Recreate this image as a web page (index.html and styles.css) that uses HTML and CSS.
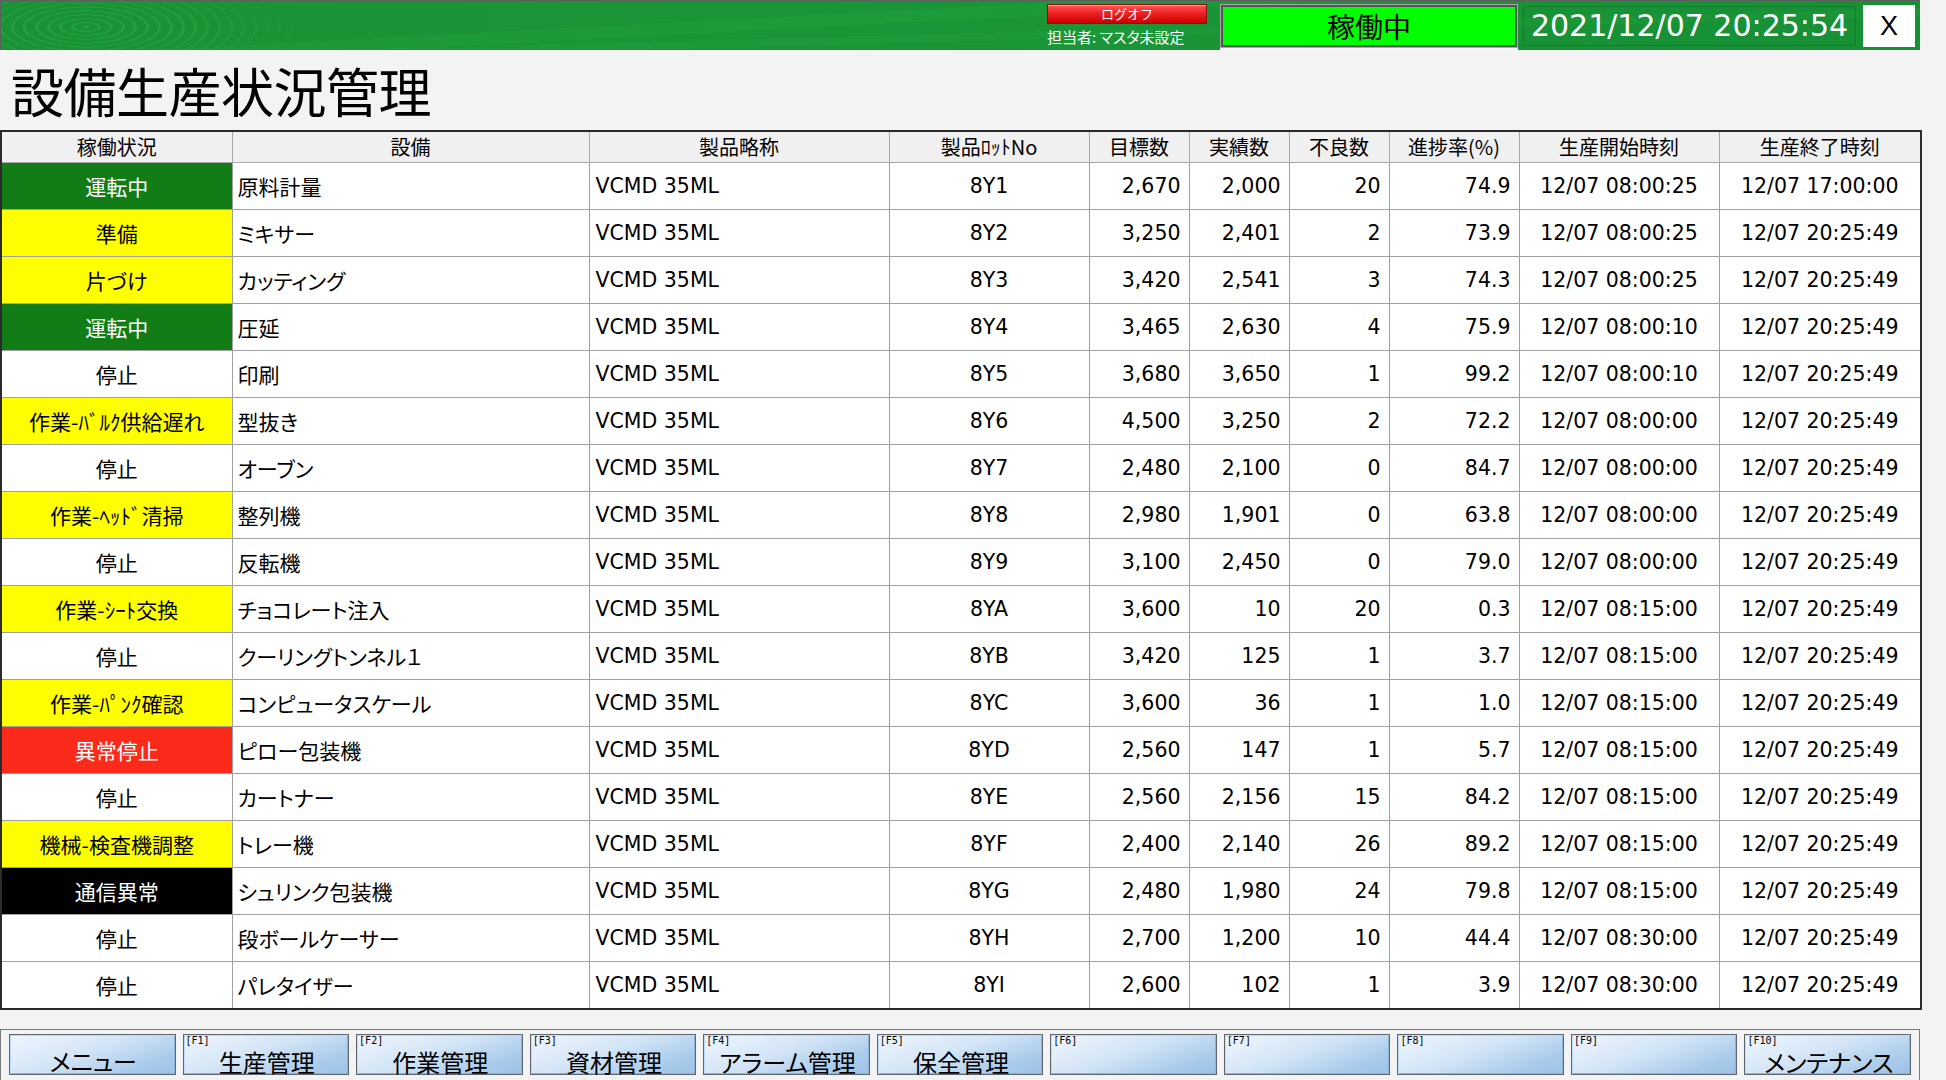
FILE: index.html
```html
<!DOCTYPE html>
<html lang="ja">
<head>
<meta charset="utf-8">
<title>設備生産状況管理</title>
<link rel="stylesheet" href="styles.css">
</head>
<body>
<div class="app">
  <header class="topbar">
    <div class="user">
      <button class="logoff">ログオフ</button>
      <div class="tanto">担当者: マスタ未設定</div>
    </div>
    <div class="state-box">稼働中</div>
    <div class="clock">2021/12/07 20:25:54</div>
    <button class="close">X</button>
  </header>

  <h1 class="title">設備生産状況管理</h1>

  <table class="grid">
    <colgroup>
      <col class="c1"><col class="c2"><col class="c3"><col class="c4"><col class="c5">
      <col class="c6"><col class="c7"><col class="c8"><col class="c9"><col class="c10">
    </colgroup>
    <thead>
      <tr>
        <th>稼働状況</th><th>設備</th><th>製品略称</th><th>製品ﾛｯﾄNo</th><th>目標数</th>
        <th>実績数</th><th>不良数</th><th>進捗率(%)</th><th>生産開始時刻</th><th>生産終了時刻</th>
      </tr>
    </thead>
    <tbody>
      <tr><td class="st st-run">運転中</td><td class="jp">原料計量</td><td class="prod">VCMD 35ML</td><td class="lot">8Y1</td><td class="num">2,670</td><td class="num">2,000</td><td class="num">20</td><td class="num">74.9</td><td class="time">12/07 08:00:25</td><td class="time">12/07 17:00:00</td></tr>
      <tr><td class="st st-warn">準備</td><td class="jp">ミキサー</td><td class="prod">VCMD 35ML</td><td class="lot">8Y2</td><td class="num">3,250</td><td class="num">2,401</td><td class="num">2</td><td class="num">73.9</td><td class="time">12/07 08:00:25</td><td class="time">12/07 20:25:49</td></tr>
      <tr><td class="st st-warn">片づけ</td><td class="jp">カッティング</td><td class="prod">VCMD 35ML</td><td class="lot">8Y3</td><td class="num">3,420</td><td class="num">2,541</td><td class="num">3</td><td class="num">74.3</td><td class="time">12/07 08:00:25</td><td class="time">12/07 20:25:49</td></tr>
      <tr><td class="st st-run">運転中</td><td class="jp">圧延</td><td class="prod">VCMD 35ML</td><td class="lot">8Y4</td><td class="num">3,465</td><td class="num">2,630</td><td class="num">4</td><td class="num">75.9</td><td class="time">12/07 08:00:10</td><td class="time">12/07 20:25:49</td></tr>
      <tr><td class="st">停止</td><td class="jp">印刷</td><td class="prod">VCMD 35ML</td><td class="lot">8Y5</td><td class="num">3,680</td><td class="num">3,650</td><td class="num">1</td><td class="num">99.2</td><td class="time">12/07 08:00:10</td><td class="time">12/07 20:25:49</td></tr>
      <tr><td class="st st-warn">作業-ﾊﾞﾙｸ供給遅れ</td><td class="jp">型抜き</td><td class="prod">VCMD 35ML</td><td class="lot">8Y6</td><td class="num">4,500</td><td class="num">3,250</td><td class="num">2</td><td class="num">72.2</td><td class="time">12/07 08:00:00</td><td class="time">12/07 20:25:49</td></tr>
      <tr><td class="st">停止</td><td class="jp">オーブン</td><td class="prod">VCMD 35ML</td><td class="lot">8Y7</td><td class="num">2,480</td><td class="num">2,100</td><td class="num">0</td><td class="num">84.7</td><td class="time">12/07 08:00:00</td><td class="time">12/07 20:25:49</td></tr>
      <tr><td class="st st-warn">作業-ﾍｯﾄﾞ清掃</td><td class="jp">整列機</td><td class="prod">VCMD 35ML</td><td class="lot">8Y8</td><td class="num">2,980</td><td class="num">1,901</td><td class="num">0</td><td class="num">63.8</td><td class="time">12/07 08:00:00</td><td class="time">12/07 20:25:49</td></tr>
      <tr><td class="st">停止</td><td class="jp">反転機</td><td class="prod">VCMD 35ML</td><td class="lot">8Y9</td><td class="num">3,100</td><td class="num">2,450</td><td class="num">0</td><td class="num">79.0</td><td class="time">12/07 08:00:00</td><td class="time">12/07 20:25:49</td></tr>
      <tr><td class="st st-warn">作業-ｼｰﾄ交換</td><td class="jp">チョコレート注入</td><td class="prod">VCMD 35ML</td><td class="lot">8YA</td><td class="num">3,600</td><td class="num">10</td><td class="num">20</td><td class="num">0.3</td><td class="time">12/07 08:15:00</td><td class="time">12/07 20:25:49</td></tr>
      <tr><td class="st">停止</td><td class="jp">クーリングトンネル１</td><td class="prod">VCMD 35ML</td><td class="lot">8YB</td><td class="num">3,420</td><td class="num">125</td><td class="num">1</td><td class="num">3.7</td><td class="time">12/07 08:15:00</td><td class="time">12/07 20:25:49</td></tr>
      <tr><td class="st st-warn">作業-ﾊﾟﾝｸ確認</td><td class="jp">コンピュータスケール</td><td class="prod">VCMD 35ML</td><td class="lot">8YC</td><td class="num">3,600</td><td class="num">36</td><td class="num">1</td><td class="num">1.0</td><td class="time">12/07 08:15:00</td><td class="time">12/07 20:25:49</td></tr>
      <tr><td class="st st-err">異常停止</td><td class="jp">ピロー包装機</td><td class="prod">VCMD 35ML</td><td class="lot">8YD</td><td class="num">2,560</td><td class="num">147</td><td class="num">1</td><td class="num">5.7</td><td class="time">12/07 08:15:00</td><td class="time">12/07 20:25:49</td></tr>
      <tr><td class="st">停止</td><td class="jp">カートナー</td><td class="prod">VCMD 35ML</td><td class="lot">8YE</td><td class="num">2,560</td><td class="num">2,156</td><td class="num">15</td><td class="num">84.2</td><td class="time">12/07 08:15:00</td><td class="time">12/07 20:25:49</td></tr>
      <tr><td class="st st-warn">機械-検査機調整</td><td class="jp">トレー機</td><td class="prod">VCMD 35ML</td><td class="lot">8YF</td><td class="num">2,400</td><td class="num">2,140</td><td class="num">26</td><td class="num">89.2</td><td class="time">12/07 08:15:00</td><td class="time">12/07 20:25:49</td></tr>
      <tr><td class="st st-comm">通信異常</td><td class="jp">シュリンク包装機</td><td class="prod">VCMD 35ML</td><td class="lot">8YG</td><td class="num">2,480</td><td class="num">1,980</td><td class="num">24</td><td class="num">79.8</td><td class="time">12/07 08:15:00</td><td class="time">12/07 20:25:49</td></tr>
      <tr><td class="st">停止</td><td class="jp">段ボールケーサー</td><td class="prod">VCMD 35ML</td><td class="lot">8YH</td><td class="num">2,700</td><td class="num">1,200</td><td class="num">10</td><td class="num">44.4</td><td class="time">12/07 08:30:00</td><td class="time">12/07 20:25:49</td></tr>
      <tr><td class="st">停止</td><td class="jp">パレタイザー</td><td class="prod">VCMD 35ML</td><td class="lot">8YI</td><td class="num">2,600</td><td class="num">102</td><td class="num">1</td><td class="num">3.9</td><td class="time">12/07 08:30:00</td><td class="time">12/07 20:25:49</td></tr>
    </tbody>
  </table>

  <nav class="fkeys">
    <button class="fkey"><span class="fk-label"></span><span class="fk-text">メニュー</span></button>
    <button class="fkey"><span class="fk-label">[F1]</span><span class="fk-text">生産管理</span></button>
    <button class="fkey"><span class="fk-label">[F2]</span><span class="fk-text">作業管理</span></button>
    <button class="fkey"><span class="fk-label">[F3]</span><span class="fk-text">資材管理</span></button>
    <button class="fkey"><span class="fk-label">[F4]</span><span class="fk-text">アラーム管理</span></button>
    <button class="fkey"><span class="fk-label">[F5]</span><span class="fk-text">保全管理</span></button>
    <button class="fkey"><span class="fk-label">[F6]</span><span class="fk-text"></span></button>
    <button class="fkey"><span class="fk-label">[F7]</span><span class="fk-text"></span></button>
    <button class="fkey"><span class="fk-label">[F8]</span><span class="fk-text"></span></button>
    <button class="fkey"><span class="fk-label">[F9]</span><span class="fk-text"></span></button>
    <button class="fkey"><span class="fk-label">[F10]</span><span class="fk-text">メンテナンス</span></button>
  </nav>
</div>
</body>
</html>
```

FILE: styles.css
```css
html, body {
  margin: 0;
  padding: 0;
}

body {
  width: 1946px;
  height: 1080px;
  overflow: hidden;
  background: #f3f3f3;
  font-family: "Noto Sans CJK JP", sans-serif;
  font-feature-settings: "palt";
  color: #000;
}

.app {
  width: 1920px;
}

/* ---------- top bar ---------- */
.topbar {
  position: relative;
  box-sizing: border-box;
  height: 50px;
  border-top: 1px solid #5e5e5e;
  border-left: 1px solid #5e5e5e;
  display: flex;
  align-items: center;
  justify-content: flex-end;
  padding-right: 5px;
  background:
    linear-gradient(177deg, rgba(255,255,255,0) 0 38%, rgba(40,180,70,0.16) 38% 46%, rgba(255,255,255,0) 46% 100%),
    linear-gradient(178.5deg, rgba(255,255,255,0) 0 58%, rgba(40,180,70,0.13) 58% 66%, rgba(255,255,255,0) 66% 100%),
    linear-gradient(90deg, #1a9236 0%, #1a9637 45%, #179035 100%);
  overflow: hidden;
}

.topbar::before {
  content: "";
  position: absolute;
  left: 0;
  top: -1px;
  width: 420px;
  height: 50px;
  background: repeating-radial-gradient(ellipse 190px 62px at 85px 27px,
    rgba(45, 185, 75, 0.4) 0 3px,
    rgba(45, 185, 75, 0) 3px 12px);
  -webkit-mask-image: radial-gradient(ellipse 220px 50px at 90px 27px, #000 30%, transparent 100%);
  mask-image: radial-gradient(ellipse 220px 50px at 90px 27px, #000 30%, transparent 100%);
}

.user {
  position: relative;
  width: 160px;
  margin-right: 14px;
  display: flex;
  flex-direction: column;
  align-self: flex-start;
  padding-top: 3px;
}

.logoff {
  height: 20px;
  margin: 0;
  padding: 0;
  border: 1px solid #8a1010;
  background: linear-gradient(#ff5a5a 0%, #ee2222 45%, #cc0000 100%);
  color: #fff;
  font-family: "Noto Sans CJK JP", sans-serif;
  font-size: 13px;
  line-height: 18px;
  box-shadow: inset 0 1px 0 rgba(255,255,255,0.45);
}

.tanto {
  margin-top: 3px;
  color: #fff;
  font-size: 15px;
  line-height: 20px;
  white-space: nowrap;
}

.state-box {
  position: relative;
  box-sizing: border-box;
  width: 296px;
  height: 42px;
  border: 2px solid #555;
  box-shadow: 0 0 0 1px #a9a9a9, 0 2px 0 1px #f4f4f4;
  background: #00ff00;
  color: #000;
  font-size: 28px;
  line-height: 38px;
  text-align: center;
  margin-top: 1px;
}

.clock {
  position: relative;
  box-sizing: border-box;
  width: 333px;
  height: 40px;
  margin-left: 6px;
  border: 1px solid rgba(0, 60, 20, 0.25);
  color: #fff;
  font-family: "DejaVu Sans", sans-serif;
  font-size: 30px;
  line-height: 38px;
  text-align: center;
  white-space: nowrap;
}

.close {
  position: relative;
  width: 52px;
  height: 42px;
  margin: 0 0 0 7px;
  padding: 0;
  border: none;
  background: #fff;
  color: #000;
  font-family: "Liberation Sans", sans-serif;
  font-size: 27px;
  line-height: 42px;
}

/* ---------- title ---------- */
.title {
  margin: 0;
  height: 80px;
  padding-left: 11px;
  font-size: 53px;
  font-weight: 400;
  line-height: 80px;
  letter-spacing: -0.5px;
}

/* ---------- table ---------- */
.grid {
  width: 1920px;
  table-layout: fixed;
  border-collapse: collapse;
  border: 2px solid #2b2b2b;
  background: #fff;
}

.c1 { width: 231px; }
.c2 { width: 357px; }
.c3 { width: 300px; }
.c4 { width: 200px; }
.c5 { width: 100px; }
.c6 { width: 100px; }
.c7 { width: 100px; }
.c8 { width: 130px; }
.c9 { width: 200px; }
.c10 { width: 202px; }

.grid th {
  height: 30px;
  padding: 0;
  background: #f0f0f0;
  border: 1px solid #a8a8a8;
  border-top: none;
  font-size: 20px;
  font-weight: 400;
  line-height: 28px;
  white-space: nowrap;
  font-feature-settings: normal;
}

.grid td {
  height: 46px;
  padding: 0;
  border: 1px solid #a0a0a0;
  font-size: 21px;
  line-height: 24px;
  white-space: nowrap;
  overflow: hidden;
}

.st { text-align: center; }
.st-run { background: #127d17; color: #fff; }
.st-warn { background: #ffff00; }
.st-err { background: #fb2a1b; color: #fff; }
.st-comm { background: #000; color: #fff; }

.jp { padding-left: 5px !important; }

.prod {
  padding-left: 6px !important;
  font-family: "DejaVu Sans", "Noto Sans CJK JP", sans-serif;
  font-size: 20.5px !important;
}

.lot {
  text-align: center;
  font-family: "DejaVu Sans", "Noto Sans CJK JP", sans-serif;
  font-size: 20.5px !important;
}

.num {
  text-align: right;
  padding-right: 8px !important;
  font-family: "DejaVu Sans", sans-serif;
  font-size: 20.5px !important;
}

.time {
  text-align: center;
  font-family: "DejaVu Sans", sans-serif;
  font-size: 20.5px !important;
}

/* ---------- function keys ---------- */
.fkeys {
  box-sizing: border-box;
  width: 1920px;
  height: 51px;
  margin-top: 19px;
  border: 1px solid #7a7a7a;
  border-bottom: none;
  padding: 4px 8px 0 8px;
  display: flex;
  gap: 7px;
}

.fkey {
  flex: 1 1 0;
  height: 41px;
  margin: 0;
  padding: 0 0 0 2px;
  border: 1px solid #5f6670;
  box-shadow: inset 1px 1px 0 #bcdcff, inset -1px -1px 0 #8fb4d8;
  background: linear-gradient(160deg, #f0f6fd 0%, #d3e5f6 45%, #a9cbeb 80%, #9dc2e6 100%);
  display: flex;
  flex-direction: column;
  align-items: stretch;
  font-family: "Noto Sans CJK JP", sans-serif;
  font-feature-settings: "palt";
  color: #000;
}

.fk-label {
  height: 9px;
  font-family: "DejaVu Sans Mono", monospace;
  font-size: 10px;
  line-height: 9px;
  text-align: left;
  padding-top: 1px;
}

.fk-text {
  margin-top: 4px;
  height: 26px;
  font-size: 24px;
  line-height: 26px;
  text-align: center;
}
```
